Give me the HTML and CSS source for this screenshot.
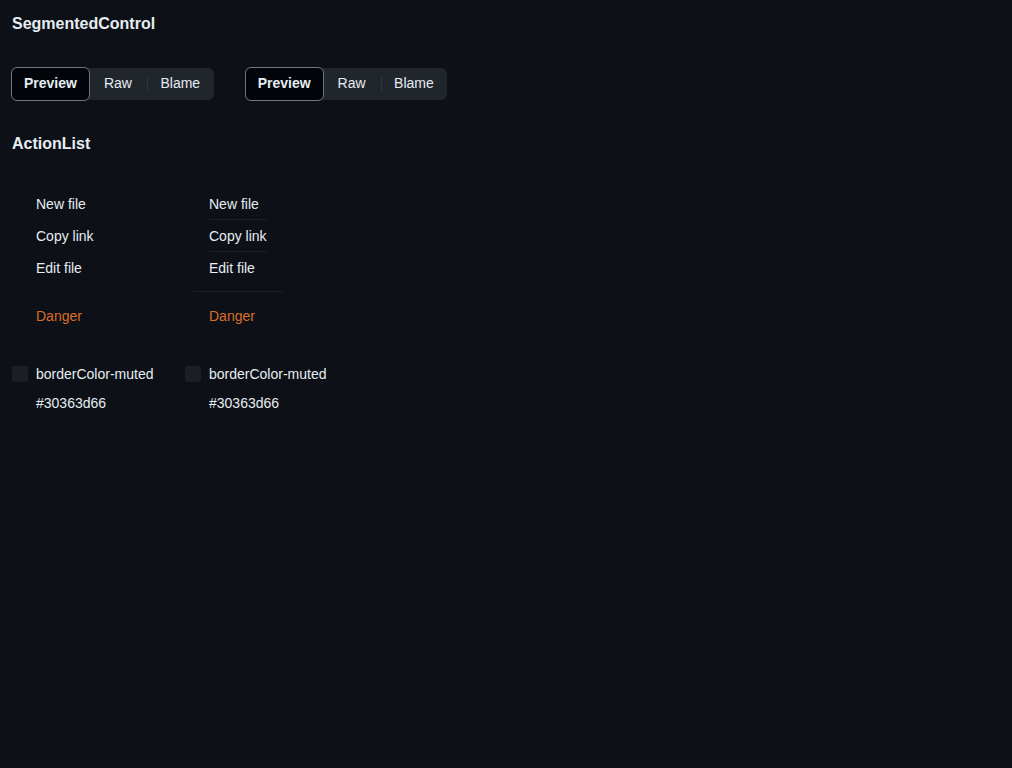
FILE: index.html
```html
<!DOCTYPE html>
<html>
<head>
<meta charset="utf-8">
<link rel="stylesheet" href="styles.css">
</head>
<body>
<h2 class="heading heading-first">SegmentedControl</h2>
<div class="seg-row">
  <div class="seg">
    <button class="seg-btn seg-selected">Preview</button>
    <button class="seg-btn seg-raw">Raw</button>
    <button class="seg-btn seg-blame">Blame</button>
  </div>
  <div class="seg">
    <button class="seg-btn seg-selected">Preview</button>
    <button class="seg-btn seg-raw">Raw</button>
    <button class="seg-btn seg-blame">Blame</button>
  </div>
</div>
<h2 class="heading heading-second">ActionList</h2>
<div class="columns">
  <div class="col">
    <ul class="list">
      <li class="item">New file</li>
      <li class="item">Copy link</li>
      <li class="item">Edit file</li>
      <li class="sep sep-blank"></li>
      <li class="item danger">Danger</li>
    </ul>
    <div class="token">
      <div class="token-row"><span class="swatch"></span><span>borderColor-muted</span></div>
      <div class="token-hex">#30363d66</div>
    </div>
  </div>
  <div class="col">
    <ul class="list">
      <li class="item item-div">New file</li>
      <li class="item item-div">Copy link</li>
      <li class="item">Edit file</li>
      <li class="sep sep-line"></li>
      <li class="item danger">Danger</li>
    </ul>
    <div class="token">
      <div class="token-row"><span class="swatch"></span><span>borderColor-muted</span></div>
      <div class="token-hex">#30363d66</div>
    </div>
  </div>
</div>
</body>
</html>
```
FILE: styles.css
```css
html, body {
  margin: 0;
  padding: 0;
  background: #0d1117;
}
body {
  padding: 12px;
  font-family: "Liberation Sans", Arial, sans-serif;
  font-size: 14px;
  color: #e6edf3;
}
.heading {
  margin: 0;
  font-size: 16px;
  line-height: 24px;
  font-weight: bold;
  color: #e6edf3;
}
.heading-second {
  margin-top: 32px;
}
.seg-row {
  display: flex;
  gap: 32px;
  margin-top: 32px;
}
.seg {
  display: flex;
  height: 32px;
  background: #21262d;
  border-radius: 6px;
}
.seg-btn {
  font-family: inherit;
  font-size: 14px;
  color: #e6edf3;
  background: transparent;
  border: 0;
  padding: 0 14px 2px;
  height: 32px;
  line-height: 30px;
  position: relative;
  cursor: pointer;
}
.seg-selected {
  height: 34px;
  margin: -1px 0 -1px -1px;
  padding: 0 12px 2px;
  background: #010409;
  border: 1px solid #6e7681;
  border-radius: 6px;
  font-weight: bold;
}
.seg-blame {
  padding: 0 13.5px 2px 14.5px;
}
.seg-blame::before {
  content: "";
  position: absolute;
  left: 1px;
  top: 8px;
  width: 1px;
  height: 16px;
  background: #30363d;
}
.columns {
  display: flex;
  gap: 31.5px;
  margin-top: 24px;
  align-items: flex-start;
}
.list {
  list-style: none;
  margin: 0;
  padding: 8px;
  display: inline-flex;
  flex-direction: column;
}
.item {
  height: 32px;
  line-height: 32px;
  padding: 0 16px;
  position: relative;
  color: #e6edf3;
}
.item-div::after {
  content: "";
  position: absolute;
  left: 16px;
  right: 16px;
  bottom: 0;
  height: 1px;
  background: #30363d66;
}
.danger {
  color: #db6d28;
}
.sep {
  height: 1px;
  margin: 7px 0 8px;
}
.sep-line {
  background: #30363d66;
}
.token {
  margin-top: 22px;
}
.token-row {
  display: flex;
  align-items: center;
  gap: 8px;
  height: 24px;
  white-space: nowrap;
}
.swatch {
  width: 16px;
  height: 16px;
  border-radius: 3px;
  background: #30363d66;
  flex: none;
}
.token-hex {
  margin-top: 5px;
  line-height: 24px;
  padding-left: 24px;
}
```
